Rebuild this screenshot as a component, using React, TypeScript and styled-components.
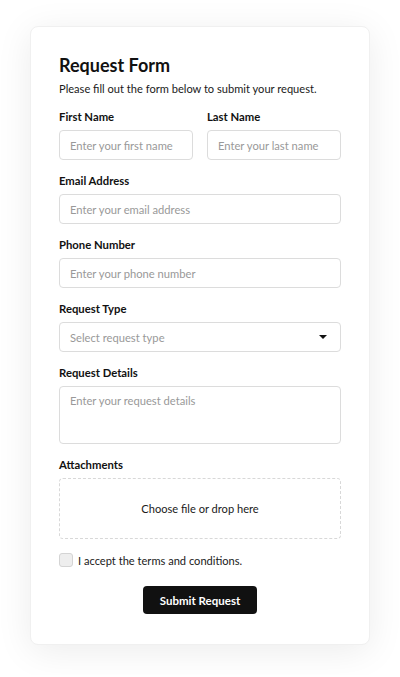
import React from "react";
import styled, { createGlobalStyle } from "styled-components";

const Global = createGlobalStyle`
  html, body { margin: 0; padding: 0; background: #ffffff; }
  body { font-family: Lato, "Liberation Sans", sans-serif; color: #111; }
  * { box-sizing: border-box; }
`;

const Page = styled.div`
  padding: 26px 30px 30px;
`;

const Card = styled.form`
  background: #fff;
  border: 1px solid #f0f0f0;
  border-radius: 8px;
  box-shadow: 0 6px 36px rgba(0, 0, 0, 0.08);
  padding: 26px 28px 30px;
  display: flex;
  flex-direction: column;
`;

const Title = styled.h1`
  margin: 0 0 3px;
  font-size: 18px;
  font-weight: 700;
  line-height: 24px;
  color: #111;
`;

const Subtitle = styled.p`
  margin: 0 0 11px;
  font-size: 11.1px;
  line-height: 18px;
  color: #1a1a1a;
`;

const Row = styled.div`
  display: grid;
  grid-template-columns: 1fr 1fr;
  gap: 14px;
`;

const Field = styled.div`
  display: flex;
  flex-direction: column;
  margin-bottom: 13px;
`;

const Label = styled.label`
  font-size: 11.3px;
  font-weight: 700;
  line-height: 16px;
  margin-bottom: 5px;
  color: #111;
`;

const Input = styled.input`
  height: 30px;
  width: 100%;
  border: 1px solid #dcdcdc;
  border-radius: 4px;
  padding: 0 10px;
  font-family: inherit;
  font-size: 11.2px;
  color: #111;
  &::placeholder { color: #999; }
  outline: none;
`;

const SelectBox = styled.div`
  height: 30px;
  border: 1px solid #dcdcdc;
  border-radius: 4px;
  padding: 0 13px 0 10px;
  display: flex;
  align-items: center;
  justify-content: space-between;
  font-size: 11.2px;
  color: #999;
`;

const Caret = styled.span`
  width: 0;
  height: 0;
  border-left: 4px solid transparent;
  border-right: 4px solid transparent;
  border-top: 4px solid #111;
`;

const TextArea = styled.textarea`
  height: 58px;
  width: 100%;
  border: 1px solid #dcdcdc;
  border-radius: 4px;
  padding: 7px 10px;
  font-family: inherit;
  font-size: 11.2px;
  resize: none;
  outline: none;
  &::placeholder { color: #999; }
`;

const Drop = styled.div`
  height: 61px;
  border: 1px dashed #d8d8d8;
  border-radius: 4px;
  display: flex;
  align-items: center;
  justify-content: center;
  font-size: 11.1px;
  color: #1a1a1a;
`;

const CheckRow = styled.label`
  display: flex;
  align-items: center;
  gap: 5px;
  font-size: 11.1px;
  color: #1a1a1a;
  margin-top: 1px;
  margin-bottom: 19px;
`;

const Box = styled.span`
  width: 14px;
  height: 14px;
  border: 1px solid #d4d4d4;
  background: #eeeeee;
  border-radius: 3px;
`;

const Button = styled.button`
  align-self: center;
  width: 114px;
  height: 28px;
  border: none;
  border-radius: 4px;
  background: #111;
  color: #fff;
  font-family: inherit;
  font-weight: 700;
  font-size: 11.5px;
`;

export default function App() {
  return (
    <>
      <Global />
      <Page>
        <Card onSubmit={(e) => e.preventDefault()}>
          <Title>Request Form</Title>
          <Subtitle>Please fill out the form below to submit your request.</Subtitle>
          <Row>
            <Field>
              <Label>First Name</Label>
              <Input placeholder="Enter your first name" />
            </Field>
            <Field>
              <Label>Last Name</Label>
              <Input placeholder="Enter your last name" />
            </Field>
          </Row>
          <Field>
            <Label>Email Address</Label>
            <Input placeholder="Enter your email address" />
          </Field>
          <Field>
            <Label>Phone Number</Label>
            <Input placeholder="Enter your phone number" />
          </Field>
          <Field>
            <Label>Request Type</Label>
            <SelectBox>
              <span>Select request type</span>
              <Caret />
            </SelectBox>
          </Field>
          <Field>
            <Label>Request Details</Label>
            <TextArea placeholder="Enter your request details" />
          </Field>
          <Field>
            <Label>Attachments</Label>
            <Drop>Choose file or drop here</Drop>
          </Field>
          <CheckRow>
            <Box />
            I accept the terms and conditions.
          </CheckRow>
          <Button type="submit">Submit Request</Button>
        </Card>
      </Page>
    </>
  );
}
